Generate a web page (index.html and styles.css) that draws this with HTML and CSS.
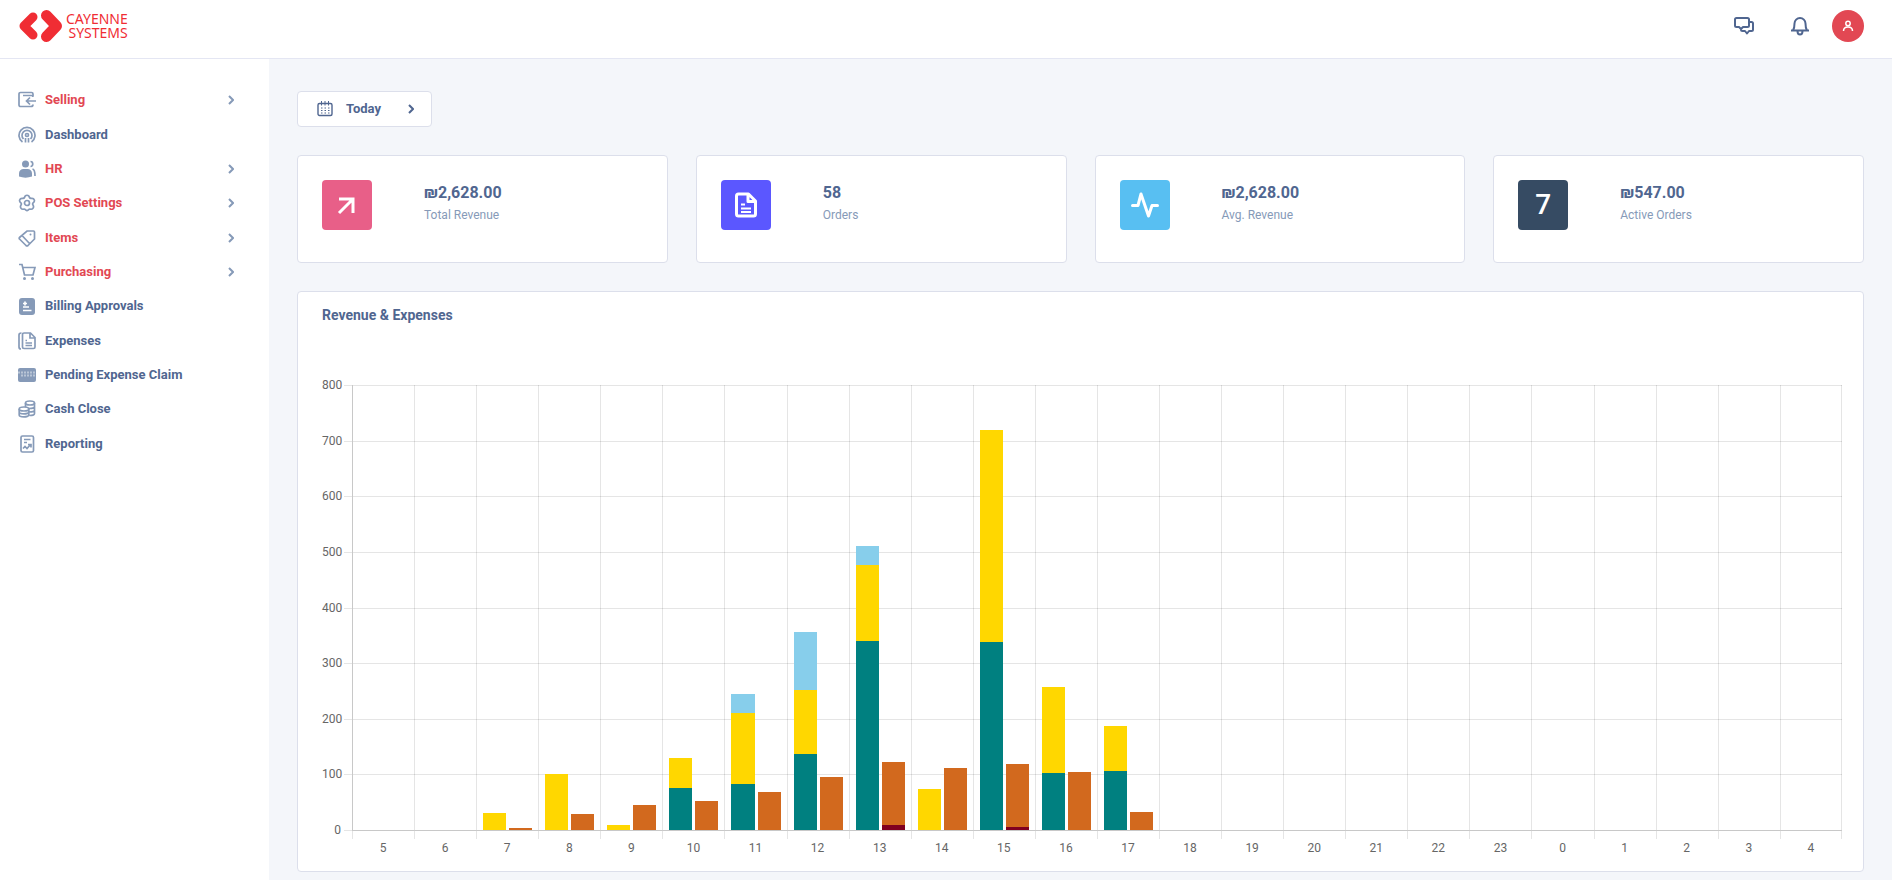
FILE: index.html
```html
<!DOCTYPE html>
<html lang="en">

<head>
  <meta charset="UTF-8">
  <meta name="viewport" content="width=device-width, initial-scale=1.0">
  <title>Cayenne Systems - Dashboard</title>
  <link rel="stylesheet" href="styles.css">
</head>

<body>
  <header class="topbar">
    <a class="logo" href="#">
      <svg class="logo-mark" viewBox="0 0 43 32" fill="none" stroke="#f02d34" stroke-linecap="round" stroke-linejoin="round">
        <path d="M14 7 5 16l9 9" stroke-width="9" />
        <path d="M27.500 5.500 37.500 16l-10 10.500" stroke-width="11" />
      </svg>
      <span class="logo-text">CAYENNE<br>SYSTEMS</span>
    </a>
    <div class="topbar-actions">
      <button class="icon-button" aria-label="Messages">
        <svg width="22" height="22" viewBox="0 0 22 22" fill="none" stroke="currentColor" stroke-width="2" stroke-linejoin="round">
          <path d="M3.500 3h11a1.500 1.500 0 0 1 1.500 1.500v6a1.500 1.500 0 0 1-1.500 1.500H10l-2 2-2-2H3.500A1.500 1.500 0 0 1 2 10.500v-6A1.500 1.500 0 0 1 3.500 3z" />
          <path d="M16 7h2.500A1.500 1.500 0 0 1 20 8.500v6a1.500 1.500 0 0 1-1.500 1.500H16l-2 2.500-2-2.500H9.500A1.500 1.500 0 0 1 8 14.500" />
        </svg>
      </button>
      <button class="icon-button" aria-label="Notifications">
        <svg width="22" height="22" viewBox="0 0 22 22" fill="none" stroke="currentColor" stroke-width="2">
          <path d="M2 15.500h18M4 15.500c1-1.500 1.500-3 1.500-7a5.500 5.500 0 0 1 11 0c0 4 .5 5.500 1.500 7M8.500 16a2.500 3.500 0 0 0 5 0" />
        </svg>
      </button>
      <button class="avatar" aria-label="Account">
        <svg width="12" height="12" viewBox="0 0 12 12" fill="none" stroke="currentColor" stroke-width="1.5">
          <circle cx="6" cy="3.5" r="2.2" />
          <path d="M1.500 11c0-2.500 2-4 4.500-4s4.500 1.500 4.500 4" />
        </svg>
      </button>
    </div>
  </header>

  <div class="layout">
    <nav class="sidebar">
      <ul class="nav">
        <li>
          <a class="nav-link parent" href="#">
            <svg class="nav-icon" viewBox="0 0 18 18"><path d="M15 5V3a1.500 1.500 0 0 0-1.500-1.500h-11A1.500 1.500 0 0 0 1 3v11a1.500 1.500 0 0 0 1.500 1.500H13a2 2 0 0 0 2-2M5 4.500h8.500a1.500 1.500 0 0 1 1.500 1.500M18 10H9M12 6.500 8.500 10l3.500 3.500" /></svg>
            <span>Selling</span>
            <svg class="chevron" viewBox="0 0 6 10"><path d="m1 1 4 4-4 4" /></svg>
          </a>
        </li>
        <li>
          <a class="nav-link" href="#">
            <svg class="nav-icon" viewBox="0 0 18 18"><circle cx="9" cy="9" r="1.5" /><path d="M4.500 16A8 8 0 1 1 13.500 16M5.500 13A5 5 0 1 1 12.500 13M7.500 12v4.500M10.500 12v4.500" /></svg>
            <span>Dashboard</span>
          </a>
        </li>
        <li>
          <a class="nav-link parent" href="#">
            <svg class="nav-icon" viewBox="0 0 18 18"><circle class="fill" cx="7.5" cy="4" r="3.5" /><path class="fill" d="M1 16.500v-3c0-3 2-4.500 4.500-4.500h4c2.500 0 4.500 1.500 4.500 4.500v3c-4 1.500-9 1.500-13 0z" /><path d="M12.500 1.500c3 0 3 5 0 5M14.500 9c2 .5 2.500 3 2.500 7" /></svg>
            <span>HR</span>
            <svg class="chevron" viewBox="0 0 6 10"><path d="m1 1 4 4-4 4" /></svg>
          </a>
        </li>
        <li>
          <a class="nav-link parent" href="#">
            <svg class="nav-icon" viewBox="0 0 18 18"><circle cx="9" cy="9" r="2.5" /><path d="M6.500 3.500C7 .5 11 .5 11.500 3.500c.5 1 1 1 2 .8 3-.3 4 3 1.500 4.700-.6.7-.5 1.300 0 2 1.500 2.500-.5 5-3 4-1 0-1.300.5-2 1.200-.6.600-1.400.6-2 0-.7-.7-1-1.200-2-1.200-2.500 1-4.500-1.500-3-4 .5-.7.6-1.300 0-2C.5 7.300 1.500 4 4.500 4.300c1 .2 1.500.2 2-.8z" /></svg>
            <span>POS Settings</span>
            <svg class="chevron" viewBox="0 0 6 10"><path d="m1 1 4 4-4 4" /></svg>
          </a>
        </li>
        <li>
          <a class="nav-link parent" href="#">
            <svg class="nav-icon" viewBox="0 0 18 18"><path d="M9 2h6.500a1 1 0 0 1 1 1v7L10 16.500a1.500 1.500 0 0 1-2 0L1.500 10a1 1 0 0 1 0-1.500zM4 6.500l7.500 8" /><circle class="fill" cx="12.5" cy="5.5" r="1" /></svg>
            <span>Items</span>
            <svg class="chevron" viewBox="0 0 6 10"><path d="m1 1 4 4-4 4" /></svg>
          </a>
        </li>
        <li>
          <a class="nav-link parent" href="#">
            <svg class="nav-icon" viewBox="0 0 18 18"><path d="M1 1.500h3L6.500 12H15l2-7.500H5" /><circle class="fill" cx="6.5" cy="15.5" r="1.5" /><circle class="fill" cx="14.5" cy="15.5" r="1.5" /></svg>
            <span>Purchasing</span>
            <svg class="chevron" viewBox="0 0 6 10"><path d="m1 1 4 4-4 4" /></svg>
          </a>
        </li>
        <li>
          <a class="nav-link" href="#">
            <svg class="nav-icon" viewBox="0 0 18 18"><rect class="fill" x="1" y="1" width="16" height="17" rx="3" /><path class="cutout" d="M5 6.500h4M7 4.500v4M5 10h6M5 13.500h8.500" /></svg>
            <span>Billing Approvals</span>
          </a>
        </li>
        <li>
          <a class="nav-link" href="#">
            <svg class="nav-icon" viewBox="0 0 18 18"><path d="M3.500 1C1.500 1 1 2 1 3v12c0 1 .5 2 2 2M6 1h6.500L17 5.500V15a1.500 1.500 0 0 1-1.500 1.500H6A1.500 1.500 0 0 1 4.500 15V2.500A1.500 1.500 0 0 1 6 1zM12 1.500V6h4.500M7.500 8.500H9M7.500 11h6.500M7.500 13.500h6.500" /></svg>
            <span>Expenses</span>
          </a>
        </li>
        <li>
          <a class="nav-link" href="#">
            <svg class="nav-icon" viewBox="0 0 18 18"><rect class="fill" x="0" y="2" width="18" height="14" rx="2" /><path class="card-marks" d="M0 6.500h18M3 9.500h15" /></svg>
            <span>Pending Expense Claim</span>
          </a>
        </li>
        <li>
          <a class="nav-link" href="#">
            <svg class="nav-icon" viewBox="0 0 18 18"><ellipse cx="12" cy="3" rx="4.5" ry="2" /><ellipse cx="6" cy="9" rx="4.8" ry="2" /><path d="M7.500 3v4M16.500 3v10.500c0 1-2 2-5 2M16.500 6.500c0 1.500-3 2-5.500 2M16.500 10c0 1.500-3 2-5.500 2M1.200 9v6c0 2.500 9.600 2.500 9.600 0V9M1.200 12c0 2.500 9.600 2.500 9.600 0" /></svg>
            <span>Cash Close</span>
          </a>
        </li>
        <li>
          <a class="nav-link" href="#">
            <svg class="nav-icon" viewBox="0 0 18 18"><rect x="3" y="1" width="12.5" height="16" rx="1.5" /><path d="M6 4.500h6.500M6 7.500h3M5 13.500l2-2 2 2 3.500-4M10 9.500h3v3" /></svg>
            <span>Reporting</span>
          </a>
        </li>
      </ul>
    </nav>

    <main class="content">
      <button class="range-button">
        <svg width="16" height="16" viewBox="0 0 16 16" fill="none" stroke="currentColor" stroke-width="1">
          <rect x="1" y="2.5" width="14" height="12" rx="1.5" stroke-width="1.4" />
          <path d="M4.500 0v4.500M11.500 0v4.500M8 0v4.500" />
          <path d="M4 7h8.500M4 9.500h8.500M4 12h8.500" stroke-dasharray="1.5 2" />
        </svg>
        <span class="range-label">Today</span>
        <svg class="chevron" viewBox="0 0 6 10"><path d="m1 1 4 4-4 4" /></svg>
      </button>

      <section class="stats">
        <div class="card stat">
          <div class="stat-icon pink">
            <svg width="28" height="28" viewBox="0 0 28 28" fill="none" stroke="currentColor" stroke-width="3"><path d="M6 8h14v14M19.500 8.500 6 22" /></svg>
          </div>
          <div class="stat-text">
            <div class="stat-value">₪2,628.00</div>
            <div class="stat-label">Total Revenue</div>
          </div>
        </div>
        <div class="card stat">
          <div class="stat-icon purple">
            <svg width="28" height="28" viewBox="0 0 28 28" fill="none" stroke="currentColor" stroke-width="3" stroke-linejoin="round"><path d="M6.500 3h10L23.500 10v13a2 2 0 0 1-2 2h-15a2 2 0 0 1-2-2V5a2 2 0 0 1 2-2zM16 3v7.500h7" /><path d="M9 13.500h4M9 17.500h10M9 21h10" stroke-width="2" /></svg>
          </div>
          <div class="stat-text">
            <div class="stat-value">58</div>
            <div class="stat-label">Orders</div>
          </div>
        </div>
        <div class="card stat">
          <div class="stat-icon blue">
            <svg width="28" height="28" viewBox="0 0 28 28" fill="none" stroke="currentColor" stroke-width="3" stroke-linecap="round" stroke-linejoin="round"><path d="M1.500 14.500H7L10 3l7.500 22 3.500-10.500h5.500" /></svg>
          </div>
          <div class="stat-text">
            <div class="stat-value">₪2,628.00</div>
            <div class="stat-label">Avg. Revenue</div>
          </div>
        </div>
        <div class="card stat">
          <div class="stat-icon navy">7</div>
          <div class="stat-text">
            <div class="stat-value">₪547.00</div>
            <div class="stat-label">Active Orders</div>
          </div>
        </div>
      </section>

      <section class="card chart-card">
        <h2>Revenue &amp; Expenses</h2>
        <div class="chart">
          <div class="y-axis">
            <span>800</span>
            <span>700</span>
            <span>600</span>
            <span>500</span>
            <span>400</span>
            <span>300</span>
            <span>200</span>
            <span>100</span>
            <span>0</span>
          </div>
          <div class="plot">
            <div class="lines">
              <i></i><i></i><i></i><i></i><i></i><i></i><i></i><i></i>
            </div>
            <div class="hours"></div>
          </div>
        </div>
      </section>
    </main>
  </div>

  <script>
    (function () {
      const MAX = 800;
      // hour: [revenue stack, expense stack], each listed from the bottom up
      const data = {
        7: [[["gold", 31]], [["orange", 3]]],
        8: [[["gold", 100]], [["orange", 29]]],
        9: [[["gold", 9]], [["orange", 45]]],
        10: [[["teal", 75], ["gold", 54]], [["orange", 53]]],
        11: [[["teal", 83], ["gold", 127], ["sky", 34]], [["orange", 68]]],
        12: [[["teal", 136], ["gold", 115], ["sky", 105]], [["orange", 95]]],
        13: [[["teal", 340], ["gold", 136], ["sky", 35]], [["maroon", 9], ["orange", 113]]],
        14: [[["gold", 73]], [["orange", 112]]],
        15: [[["teal", 338], ["gold", 381]], [["maroon", 5], ["orange", 113]]],
        16: [[["teal", 102], ["gold", 156]], [["orange", 104]]],
        17: [[["teal", 106], ["gold", 81]], [["orange", 33]]]
      };
      function add(parent, cls) {
        let el = document.createElement("div");
        el.className = cls;
        parent.appendChild(el);
        return el;
      }
      let hours = document.querySelector(".hours");
      // business day runs from 5:00 to 4:00
      for (let i = 0; i < 24; i++) {
        let h = (i + 5) % 24;
        let hour = add(hours, "hour");
        let bars = add(hour, "bars");
        for (let stack of data[h] || []) {
          let bar = add(bars, "bar");
          for (let [color, value] of stack) {
            add(bar, color).style.height = value / MAX * 100 + "%";
          }
        }
        add(hour, "tick");
        add(hour, "hour-label").textContent = h;
      }
    })();
  </script>
</body>

</html>
```
FILE: styles.css
```css
* {
  box-sizing: border-box;
}

body {
  margin: 0;
  min-height: 100vh;
  display: flex;
  flex-direction: column;
  background-color: #f4f6fa;
  color: #506690;
  font-family: Roboto, sans-serif;
  font-size: 13px;
  line-height: 20px;
}

a {
  color: inherit;
  text-decoration: none;
}

button {
  font: inherit;
  color: inherit;
  cursor: pointer;
}

.topbar {
  display: flex;
  justify-content: space-between;
  align-items: center;
  padding: 10px 28px 16px 19px;
  background-color: #fff;
  border-bottom: 1px solid #e4e6f3;
}

.logo {
  display: flex;
  align-items: center;
  gap: 4px;
  color: #f02d34;
}

.logo-mark {
  width: 43px;
  height: 32px;
}

.logo-text {
  font-family: "Noto Sans", sans-serif;
  font-size: 14px;
  line-height: 14px;
  text-align: right;
}

.topbar-actions {
  display: flex;
  align-items: center;
}

.icon-button {
  display: flex;
  padding: 0;
  margin-right: 34px;
  border: 0;
  background: none;
}

.icon-button + .icon-button {
  margin-right: 21px;
}

.avatar {
  display: flex;
  align-items: center;
  justify-content: center;
  width: 32px;
  height: 32px;
  padding: 0;
  border: 0;
  border-radius: 50%;
  background-color: #e24853;
  color: #fff;
}

.layout {
  flex: 1;
  display: flex;
}

.sidebar {
  width: 269px;
  flex-shrink: 0;
  padding-top: 24px;
  background-color: #fff;
}

.nav {
  list-style: none;
  margin: 0;
  padding: 0;
}

.nav li {
  height: 34px;
}

.nav li:nth-child(3n+1) {
  height: 35px;
}

.nav-link {
  display: flex;
  align-items: center;
  height: 34px;
  padding: 0 35px 0 18px;
  font-weight: 700;
}

.nav-link span {
  flex: 1;
}

.nav-link.parent {
  color: #e24853;
}

.nav-icon {
  width: 18px;
  height: 18px;
  margin-right: 9px;
  fill: none;
  stroke: #869ab8;
  stroke-width: 1.7;
}

.nav-icon .fill {
  fill: #869ab8;
  stroke: none;
}

.nav-icon .cutout {
  stroke: #fff;
}

.nav-icon .card-marks {
  stroke: #b9c5d6;
  stroke-width: 2;
  stroke-dasharray: 2 1;
}

.chevron {
  width: 6px;
  height: 10px;
  fill: none;
  stroke: currentColor;
  stroke-width: 2;
}

.nav-link .chevron {
  stroke: #869ab8;
}

.content {
  flex: 1;
  min-width: 0;
  padding: 32px 28px 8px;
}

.range-button {
  display: flex;
  align-items: center;
  height: 36px;
  padding: 0 17px 0 19px;
  border: 1px solid #dcdfeb;
  border-radius: 4px;
  background-color: #fff;
  font-weight: 700;
}

.range-label {
  margin: 0 27px 0 13px;
}

.card {
  background-color: #fff;
  border: 1px solid #dcdfeb;
  border-radius: 4px;
}

.stats {
  display: grid;
  grid-template-columns: repeat(4, 1fr);
  gap: 28px;
  margin: 28px 0;
}

.stat {
  display: flex;
  gap: 52px;
  padding: 24px 24px 32px;
}

.stat-icon {
  display: flex;
  align-items: center;
  justify-content: center;
  width: 50px;
  height: 50px;
  border-radius: 4px;
  color: #fff;
  font-size: 28px;
  font-weight: 500;
}

.pink {
  background-color: #e85f88;
}

.purple {
  background-color: #5b57ff;
}

.blue {
  background-color: #58bff2;
}

.navy {
  background-color: #364b63;
}

.stat-text {
  padding-top: 1px;
}

.stat-value {
  font-size: 16px;
  font-weight: 700;
  line-height: 24px;
}

.stat-label {
  color: #869ab8;
  font-size: 12px;
}

.chart-card {
  padding: 13px 21px 14px 24px;
}

.chart-card h2 {
  margin: 0 0 60px;
  font-size: 14px;
  font-weight: 700;
  line-height: 20px;
}

.chart {
  display: grid;
  grid-template-columns: 30px 1fr;
  color: #666;
  font-size: 12px;
}

.y-axis {
  display: flex;
  flex-direction: column;
  justify-content: space-between;
  height: 459px;
  margin-top: -7px;
  padding-right: 11px;
  line-height: 14px;
  text-align: right;
}

.plot {
  position: relative;
}

/* horizontal grid, sticks out to the left as tick marks */
.lines {
  position: absolute;
  top: 0;
  left: -8px;
  right: 0;
  height: 446px;
  display: flex;
  flex-direction: column;
  border-bottom: 1px solid #e5e5e5;
}

.lines i {
  flex: 1;
  border-top: 1px solid rgba(0, 0, 0, 0.1);
}

.hours {
  position: relative;
  display: flex;
}

.hour {
  flex: 1;
  text-align: center;
}

.bars {
  display: flex;
  gap: 3px;
  height: 446px;
  padding: 0 6px;
  border-left: 1px solid rgba(0, 0, 0, 0.1);
  border-bottom: 1px solid #c8c8c8;
}

.hour:first-child .bars {
  border-left-color: #c8c8c8;
}

.hour:last-child .bars {
  border-right: 1px solid rgba(0, 0, 0, 0.1);
}

.bar {
  flex: 1;
  display: flex;
  flex-direction: column-reverse;
}

.tick {
  height: 8px;
  border-left: 1px solid rgba(0, 0, 0, 0.1);
}

.hour:last-child .tick {
  border-right: 1px solid rgba(0, 0, 0, 0.1);
}

.hour-label {
  line-height: 18px;
}

.teal {
  background-color: #008080;
}

.gold {
  background-color: #ffd700;
}

.sky {
  background-color: #87ceeb;
}

.orange {
  background-color: #d2691e;
}

.maroon {
  background-color: #800020;
}
```
